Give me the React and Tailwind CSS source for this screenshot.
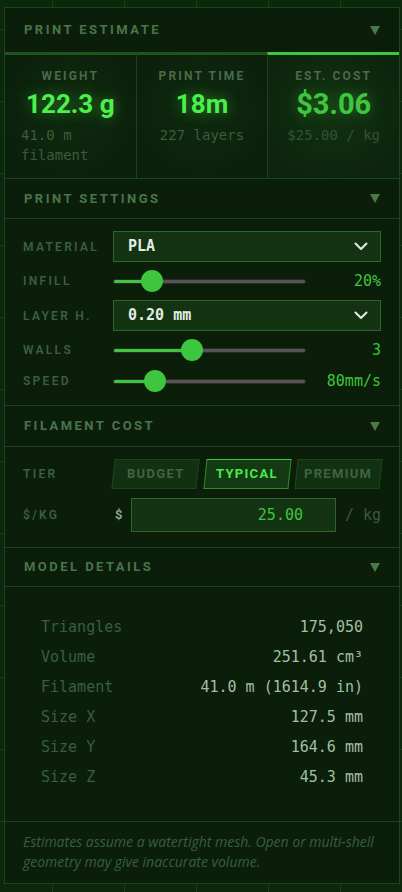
const label = "font-['Roboto',sans-serif] font-bold uppercase";
const num = "font-['Roboto',sans-serif] font-bold";
const mono = "font-['DejaVu_Sans_Mono',monospace]";

function Caret() {
  return (
    <svg width="10" height="9" viewBox="0 0 10 9">
      <path d="M0 0h10L5 9z" fill="#4a7a4a" />
    </svg>
  );
}

function SectionHeader({ title, className = "" }) {
  return (
    <div className={`flex items-center justify-between px-[19px] border-b border-[#1b451b] ${className}`}>
      <span className={`${label} text-[13px] tracking-[0.19em] text-[#4a744a]`}>{title}</span>
      <Caret />
    </div>
  );
}

const stats = [
  { label: "WEIGHT", value: "122.3 g", sub: "41.0 m filament" },
  { label: "PRINT TIME", value: "18m", sub: "227 layers" },
  { label: "EST. COST", value: "$3.06", sub: "$25.00 / kg", active: true },
];

function StatCell({ stat, first }) {
  return (
    <div
      className={`flex-1 flex flex-col items-center px-4 pt-[13px] pb-[13px] border-t-[3px] ${
        first ? "" : "border-l border-l-[#1b451b]"
      } ${
        stat.active
          ? "border-t-[#3ec63e] bg-[radial-gradient(circle_at_50%_45%,#123212,#0d250d_75%)]"
          : "border-t-[#1f561f] bg-[radial-gradient(circle_at_50%_45%,#0f2a0f,#0b200b_75%)]"
      }`}
    >
      <div className={`${label} text-[12px] leading-4 tracking-[0.18em] text-[#4a6a4a]`}>{stat.label}</div>
      {stat.active ? (
        <div className={`${num} mt-[3px] text-[29px] leading-[34px] text-[#3ec63e] [text-shadow:0_0_14px_rgba(62,198,62,0.45)]`}>
          {stat.value}
        </div>
      ) : (
        <div className={`${num} mt-[3px] text-[26px] leading-[34px] text-[#4cf04c] [text-shadow:0_0_14px_rgba(76,240,76,0.5)]`}>
          {stat.value}
        </div>
      )}
      <div className={`${mono} mt-1 text-[14px] leading-5 ${stat.active ? "text-[#2f552f]" : "text-[#3a5e3a]"}`}>
        {stat.sub}
      </div>
    </div>
  );
}

function Select({ value }) {
  return (
    <div className="flex-1 h-[31px] flex items-center justify-between pl-[14px] pr-[12px] bg-[#133313] border border-[#2b682b]">
      <span className={`${mono} font-bold text-[15px] text-[#e2ece2]`}>{value}</span>
      <svg width="14" height="9" viewBox="0 0 14 9">
        <path d="M1.5 1.5l5.5 5.5 5.5-5.5" fill="none" stroke="#e2ece2" strokeWidth="2" strokeLinecap="round" strokeLinejoin="round" />
      </svg>
    </div>
  );
}

function Slider({ pct, value }) {
  return (
    <div className="flex-1 flex items-center">
      <div className="relative flex-1 h-6 flex items-center">
        <div className="w-full h-[5px] rounded-full bg-[#555555] border border-[#2c2c2c] overflow-hidden">
          <div className="h-full bg-[#3ec63e]" style={{ width: `${pct}%` }} />
        </div>
        <div
          className="absolute top-[1px] w-[22px] h-[22px] rounded-full bg-[#3ec63e]"
          style={{ left: `calc(${pct}% - 11px)` }}
        />
      </div>
      <div className={`${mono} w-[75px] text-right text-[15px] text-[#3ec63e]`}>{value}</div>
    </div>
  );
}

function Row({ name, children, className = "" }) {
  return (
    <div className={`flex items-center ${className}`}>
      <div className={`${label} w-[90px] shrink-0 text-[12px] font-semibold tracking-[0.19em] text-[#3d5f3d]`}>{name}</div>
      {children}
    </div>
  );
}

const tiers = ["BUDGET", "TYPICAL", "PREMIUM"];

const details = [
  ["Triangles", "175,050"],
  ["Volume", "251.61 cm³"],
  ["Filament", "41.0 m (1614.9 in)"],
  ["Size X", "127.5 mm"],
  ["Size Y", "164.6 mm"],
  ["Size Z", "45.3 mm"],
];

export default function App() {
  return (
    <div className="min-h-screen pt-[7px] pl-[4px] pr-[2px] pb-[9px] bg-[#0c280c] bg-[linear-gradient(to_right,#164016_1px,transparent_1px),linear-gradient(to_bottom,#164016_1px,transparent_1px)] bg-[size:72px_72px] bg-[position:52px_29px]">
      <div className="border border-[#1b451b] bg-[#0a1e0a]">
        <div className="h-[44px] flex items-center justify-between px-[19px]">
          <span className={`${label} text-[13px] tracking-[0.19em] text-[#4a744a]`}>PRINT ESTIMATE</span>
          <Caret />
        </div>
        <div className="flex border-b border-[#1b451b]">
          {stats.map((s, i) => (
            <StatCell key={s.label} stat={s} first={i === 0} />
          ))}
        </div>

        <SectionHeader title="PRINT SETTINGS" className="h-[40px]" />
        <div className="flex flex-col gap-[7px] px-[18px] pt-3 pb-3 border-b border-[#1b451b]">
          <Row name="MATERIAL">
            <Select value="PLA" />
          </Row>
          <Row name="INFILL" className="h-6">
            <Slider pct={20} value="20%" />
          </Row>
          <Row name="LAYER H.">
            <Select value="0.20 mm" />
          </Row>
          <Row name="WALLS" className="h-6">
            <Slider pct={41} value="3" />
          </Row>
          <Row name="SPEED" className="h-6">
            <Slider pct={22} value="80mm/s" />
          </Row>
        </div>

        <SectionHeader title="FILAMENT COST" className="h-[41px]" />
        <div className="flex flex-col gap-[9px] px-[18px] pt-[12px] pb-[15px] border-b border-[#1b451b]">
          <Row name="TIER">
            <div className="flex-1 flex gap-[7px] h-[30px]">
              {tiers.map((t) => (
                <div
                  key={t}
                  className={`flex-1 flex items-center justify-center -skew-x-6 border ${
                    t === "TYPICAL"
                      ? "bg-[#133a13] border-[#2e8a2e] border-t-[#3ec63e]"
                      : "bg-[#123012] border-[#1d451d]"
                  }`}
                >
                  <span
                    className={`skew-x-6 ${label} text-[13px] tracking-[0.1em] ${
                      t === "TYPICAL" ? "text-[#4ce84c]" : "text-[#3f653f]"
                    }`}
                  >
                    {t}
                  </span>
                </div>
              ))}
            </div>
          </Row>
          <Row name="$/KG">
            <span className={`${label} ml-[2px] w-[16px] text-[13px] text-[#8aa88a]`}>$</span>
            <div className="w-[205px] h-[34px] flex items-center justify-end pr-8 bg-[#133313] border border-[#2b682b]">
              <span className={`${mono} text-[15px] text-[#3ec63e]`}>25.00</span>
            </div>
            <span className={`${mono} ml-auto text-[15px] text-[#3a5a3a]`}>/ kg</span>
          </Row>
        </div>

        <SectionHeader title="MODEL DETAILS" className="h-[39px]" />
        <div className="px-[36px] pt-[25px] pb-[29px] border-b border-[#1b451b]">
          {details.map(([k, v]) => (
            <div key={k} className={`${mono} h-[30px] flex items-center justify-between text-[15px]`}>
              <span className="text-[#3a5e3a]">{k}</span>
              <span className="text-[#a3bfa3]">{v}</span>
            </div>
          ))}
        </div>

        <div className="px-[18px] pt-[10px] pb-[11px] font-['Open_Sans',sans-serif] italic text-[14px] leading-5 text-[#3a5e3a]">
          Estimates assume a watertight mesh. Open or multi-shell geometry may give inaccurate volume.
        </div>
      </div>
    </div>
  );
}
